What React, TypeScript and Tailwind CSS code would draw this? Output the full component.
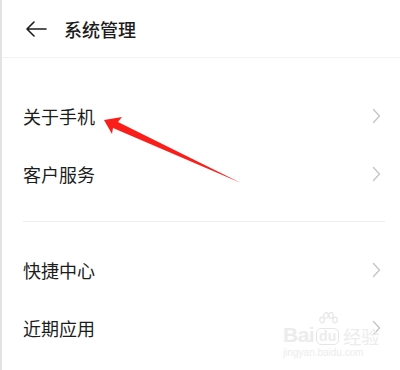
import React from 'react';

const font = { fontFamily: '"Noto Sans CJK SC", "Noto Sans", sans-serif' };

const Chevron: React.FC = () => (
  <svg width="9" height="16" viewBox="0 0 9 16" fill="none">
    <path d="M1.5 1.5 L7.5 8 L1.5 14.5" stroke="#c4c4c4" strokeWidth="1.3" strokeLinecap="round" strokeLinejoin="round" />
  </svg>
);

const Row: React.FC<{ label: string }> = ({ label }) => (
  <div className="flex h-[58px] items-center justify-between pl-[21px] pr-[19px]">
    <span className="text-[18px] leading-none text-[#1c1c1c]">{label}</span>
    <Chevron />
  </div>
);

const App: React.FC = () => {
  return (
    <div
      className="relative h-[370px] w-[400px] overflow-hidden border-l-2 border-[#e2e2e2] bg-white"
      style={font}
    >
      {/* Header */}
      <div className="flex h-[58px] items-center border-b border-[#f2f2f2] pl-[23px]">
        <svg width="22" height="16" viewBox="0 0 22 16" fill="none">
          <path d="M21 8 H2 M9 1 L2 8 L9 15" stroke="#1c1c1c" strokeWidth="1.6" strokeLinecap="round" strokeLinejoin="round" />
        </svg>
        <span className="ml-[17px] text-[18px] font-medium leading-none text-[#1c1c1c]">系统管理</span>
      </div>

      <div className="pt-[29px]">
        <Row label="关于手机" />
        <Row label="客户服务" />
      </div>

      <div className="ml-[21px] mr-[15px] mt-[18px] h-px bg-[#ededed]" />

      <div className="pt-[19px]">
        <Row label="快捷中心" />
        <Row label="近期应用" />
      </div>

      {/* red annotation arrow */}
      <svg className="absolute left-0 top-0" width="400" height="370" viewBox="0 0 400 370">
        <polygon points="102,120 120,117 116,122 239,183 111,128 110,134" fill="#fa1e1a" />
      </svg>

      {/* watermark */}
      <div className="absolute left-[281px] top-[312px] flex flex-col items-start" style={{ fontFamily: '"Liberation Sans", sans-serif' }}>
        <div className="flex items-end gap-[2px] text-[#ececec]">
          <span className="text-[21px] font-bold leading-none tracking-tight">Bai</span>
          <div className="flex flex-col items-center">
            <svg width="20" height="16" viewBox="0 0 20 16" fill="none" stroke="#e6e6e6" strokeWidth="1.2">
              <ellipse cx="4" cy="8" rx="2.2" ry="2.8" />
              <ellipse cx="8" cy="3.5" rx="2.2" ry="2.8" />
              <ellipse cx="13" cy="3.5" rx="2.2" ry="2.8" />
              <ellipse cx="17" cy="8" rx="2.2" ry="2.8" />
            </svg>
            <span className="rounded-[5px] border border-[#e6e6e6] px-[2px] text-[14px] font-bold leading-[15px]">du</span>
          </div>
          <span className="ml-[2px] text-[18px] leading-none" style={font}>经验</span>
        </div>
        <span className="mt-[3px] text-[10px] leading-none text-[#ececec]">jingyan.baidu.com</span>
      </div>
    </div>
  );
};

export default App;
